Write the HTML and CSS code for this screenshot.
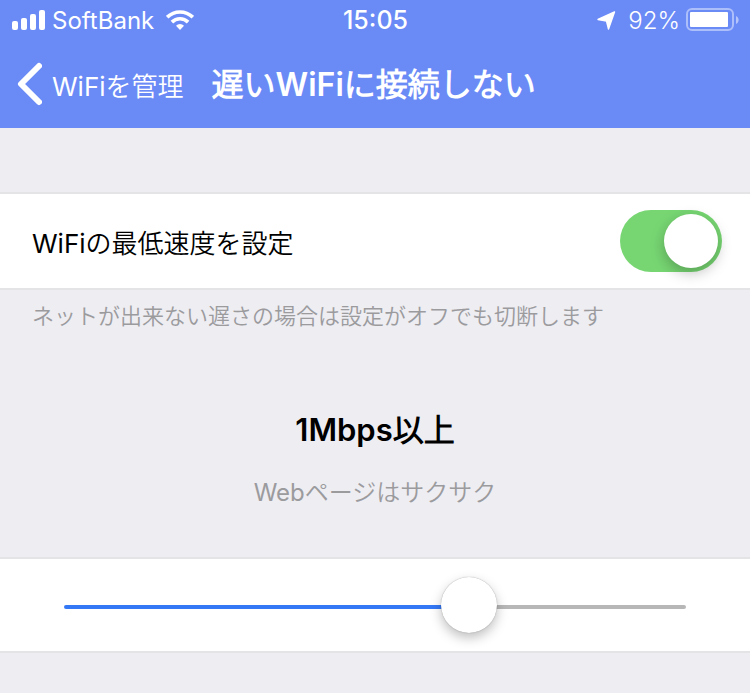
FILE: index.html
```html
<!DOCTYPE html>
<html lang="ja">
<head>
    <meta charset="UTF-8">
    <meta name="viewport" content="width=device-width, initial-scale=1.0">
    <title>遅いWiFiに接続しない</title>
    <link rel="stylesheet" href="styles.css">
</head>
<body>
    <header class="header">
        <div class="status-bar">
            <div class="status-left">
                <svg class="signal" width="34" height="20" viewBox="0 0 34 20" fill="currentColor" aria-hidden="true">
                    <rect x="0" y="11" width="6" height="9" rx="2"/>
                    <rect x="9" y="8" width="6" height="12" rx="2"/>
                    <rect x="18" y="4" width="6" height="16" rx="2"/>
                    <rect x="27" y="0" width="6" height="20" rx="2"/>
                </svg>
                <span class="carrier">SoftBank</span>
                <svg class="wifi" width="28" height="20" viewBox="0 0 28 20" aria-hidden="true">
                    <g fill="none" stroke="currentColor" stroke-width="3.6">
                        <path d="M1.2 7.2a18.4 18.4 0 0 1 25.6 0"/>
                        <path d="M5.9 12.1a11.6 11.6 0 0 1 16.2 0"/>
                    </g>
                    <path d="M14 20l-4-4.2a5.6 5.6 0 0 1 8 0z" fill="currentColor"/>
                </svg>
            </div>
            <time class="clock">15:05</time>
            <div class="status-right">
                <svg class="location" width="19" height="19" viewBox="0 0 19 19" fill="currentColor" stroke="currentColor" stroke-width="1.4" stroke-linejoin="round" aria-hidden="true">
                    <path d="M17.500 1L1 8.500l8.500 1.500L11.500 18z"/>
                </svg>
                <span class="percent">92%</span>
                <svg class="battery" width="53" height="24" viewBox="0 0 53 24" aria-hidden="true">
                    <rect x="1" y="1" width="46" height="21" rx="5" fill="none" stroke="currentColor" stroke-width="2" opacity=".45"/>
                    <rect x="4" y="4" width="38" height="15" rx="1" fill="currentColor"/>
                    <path d="M50 8c3.500 1.500 3.500 6.500 0 8z" fill="currentColor" opacity=".5"/>
                </svg>
            </div>
        </div>
        <nav class="nav-bar">
            <a class="back" href="#">
                <svg width="26" height="44" viewBox="0 0 26 44" fill="none" stroke="currentColor" stroke-width="6" stroke-linecap="round" stroke-linejoin="round" aria-hidden="true">
                    <path d="M23 4L5 22l18 18"/>
                </svg>
                <span>WiFiを管理</span>
            </a>
            <h1 class="title">遅いWiFiに接続しない</h1>
        </nav>
    </header>

    <main class="content">
        <div class="cell">
            <label for="minSpeed">WiFiの最低速度を設定</label>
            <input class="switch" type="checkbox" role="switch" id="minSpeed" checked>
        </div>
        <p class="note">ネットが出来ない遅さの場合は設定がオフでも切断します</p>

        <div class="speed">
            <h2 class="speed-value" id="speedValue">1Mbps以上</h2>
            <p class="speed-hint">Webページはサクサク</p>
        </div>

        <div class="cell slider-cell">
            <input class="slider" type="range" min="0" max="3" step="1" value="2" aria-labelledby="speedValue">
        </div>
    </main>
</body>
</html>
```

FILE: styles.css
```css
* {
    box-sizing: border-box;
}
body {
    margin: 0;
    font-family: Inter, "Noto Sans CJK JP DemiLight", "Noto Sans CJK JP", sans-serif;
    background-color: #eeedf2;
    color: #000;
}
.header {
    background-color: #6a8af6;
    color: #fff;
}
.status-bar {
    display: grid;
    grid-template-columns: 1fr auto 1fr;
    align-items: center;
    height: 40px;
    padding: 0 11px 0 12px;
    font-size: 24px;
}
.status-left,
.status-right {
    display: flex;
    align-items: center;
}
.status-left {
    gap: 6px;
}
.wifi {
    margin-left: 6px;
}
.status-right {
    justify-content: flex-end;
    gap: 6px;
}
.location {
    margin-right: 6px;
}
.percent {
    font-weight: 300;
}
.clock {
    font-size: 25px;
    font-weight: 500;
}
.nav-bar {
    display: flex;
    align-items: center;
    gap: 28px;
    height: 88px;
    padding: 0 16px;
}
.back {
    display: flex;
    align-items: center;
    gap: 10px;
    color: #fff;
    font-size: 26px;
    text-decoration: none;
    white-space: nowrap;
}
.title {
    margin: 0;
    padding-bottom: 4px;
    font-size: 32px;
    font-weight: 600;
    white-space: nowrap;
}
.content {
    padding-top: 64px;
}
.cell {
    display: flex;
    align-items: center;
    justify-content: space-between;
    min-height: 98px;
    padding: 0 28px 0 32px;
    background-color: #fff;
    border-top: 2px solid #e4e4e6;
    border-bottom: 2px solid #e4e4e6;
    font-size: 26px;
}
.switch {
    appearance: none;
    flex: none;
    width: 102px;
    height: 62px;
    margin: 0;
    padding: 4px;
    border-radius: 31px;
    background-color: #dcdce0;
    cursor: pointer;
}
.switch::before {
    content: "";
    display: block;
    width: 54px;
    height: 54px;
    border-radius: 50%;
    background-color: #fff;
    box-shadow: 0 5px 14px rgba(0, 0, 0, 0.25);
}
.switch:checked {
    background-color: #77d672;
}
.switch:checked::before {
    margin-left: auto;
}
.note {
    margin: 0;
    padding: 10px 32px;
    color: #9b9b9e;
    font-size: 22px;
    font-weight: 350;
    line-height: 32px;
}
.speed {
    padding: 66px 32px 46px;
    text-align: center;
}
.speed-value {
    margin: 0;
    font-size: 31px;
    font-weight: 600;
    line-height: 44px;
}
.speed-hint {
    margin: 23px 0 0;
    color: #9b9b9e;
    font-size: 24px;
    line-height: 36px;
}
.slider-cell {
    min-height: 96px;
    padding: 4px 64px 0;
}
.slider {
    appearance: none;
    width: 100%;
    height: 60px;
    margin: 0;
    background: transparent;
    cursor: pointer;
}
.slider::-webkit-slider-runnable-track {
    height: 4px;
    border-radius: 2px;
    background: linear-gradient(to right, #3478f6 66%, #b7b7b7 66%);
}
.slider::-webkit-slider-thumb {
    appearance: none;
    width: 56px;
    height: 56px;
    margin-top: -28px;
    border-radius: 50%;
    background-color: #fff;
    box-shadow: 0 0 1px rgba(0, 0, 0, 0.4), 0 5px 12px rgba(0, 0, 0, 0.25);
}
```
